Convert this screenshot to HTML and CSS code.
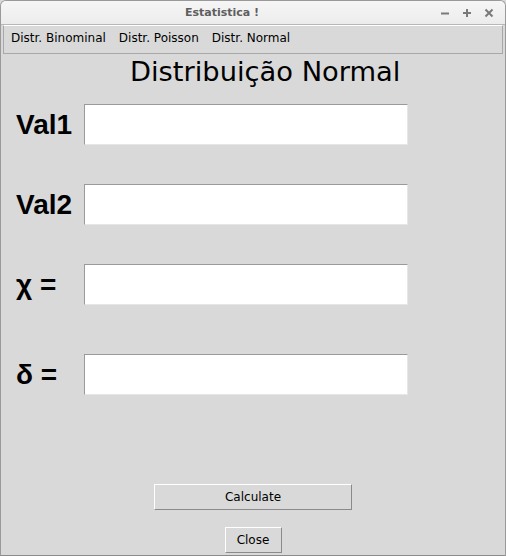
FILE: index.html
```html
<!DOCTYPE html>
<html>
<head>
<meta charset="utf-8">
<link rel="stylesheet" href="styles.css">
</head>
<body>
<div class="window">
  <div class="titlebar">
    <span class="title">Estatistica !</span>
    <div class="controls">
      <svg width="10" height="10" viewBox="0 0 10 10"><path d="M1 5.5H9" stroke="#7a7a7a" stroke-width="2"/></svg>
      <svg width="10" height="10" viewBox="0 0 10 10"><path d="M1 5H9M5 1V9" stroke="#7a7a7a" stroke-width="2"/></svg>
      <svg width="10" height="10" viewBox="0 0 10 10"><path d="M1.5 1.5L8.5 8.5M8.5 1.5L1.5 8.5" stroke="#7a7a7a" stroke-width="2"/></svg>
    </div>
  </div>
  <div class="menubar">
    <span class="menu">Distr. Binominal</span>
    <span class="menu">Distr. Poisson</span>
    <span class="menu">Distr. Normal</span>
  </div>
  <div class="content">
    <div class="heading">Distribuição Normal</div>
    <div class="form">
      <div class="row r1"><span class="label">Val1</span><div class="entry"></div></div>
      <div class="row r2"><span class="label">Val2</span><div class="entry"></div></div>
      <div class="row r3"><span class="label">χ =</span><div class="entry"></div></div>
      <div class="row r4"><span class="label">δ =</span><div class="entry"></div></div>
    </div>
    <div class="buttons">
      <div class="btn calc">Calculate</div>
      <div class="btn close">Close</div>
    </div>
  </div>
</div>
</body>
</html>
```
FILE: styles.css
```css
html, body { margin: 0; padding: 0; background: #d9d9d9; }
.window {
  width: 506px; height: 556px; box-sizing: border-box;
  border: 1px solid #9a9a9a; border-bottom-color: #8a8a8a;
  border-radius: 6px 6px 0 0;
  background: #d9d9d9; overflow: hidden;
  display: flex; flex-direction: column;
}
.titlebar {
  height: 23px; flex: none;
  background: linear-gradient(#f6f6f6, #ececec);
  border-bottom: 1px solid #b8b8b8;
  position: relative;
  display: flex; align-items: center; justify-content: center;
}
.title {
  font-family: "DejaVu Sans", sans-serif; font-weight: bold; font-size: 11px;
  color: #5e5e5e; margin-left: -62px;
}
.controls {
  position: absolute; right: 11px; top: 7px;
  display: flex; gap: 12px;
}
.menubar {
  height: 29px; flex: none; box-sizing: border-box;
  margin: 0 2px;
  border: 1px solid #a8a8a8; border-top: 1px solid #ffffff;
  background: #d9d9d9;
  display: flex; align-items: center; padding-left: 7px; padding-bottom: 4px; gap: 13px;
}
.menu {
  font-family: "DejaVu Sans", sans-serif; font-size: 12px; color: #000;
}
.content { flex: 1; display: flex; flex-direction: column; }
.heading {
  font-family: "DejaVu Sans", sans-serif; font-size: 27.3px; color: #000;
  padding-left: 129px; margin-top: 2px; line-height: 32px;
}
.form { display: flex; flex-direction: column; padding-left: 15px; margin-top: 16px; }
.row { display: flex; align-items: center; height: 41px; }
.r2 { margin-top: 39px; }
.r3 { margin-top: 39px; }
.r4 { margin-top: 49px; }
.label {
  width: 68px; font-family: "Liberation Sans", sans-serif; font-weight: bold;
  font-size: 28px; color: #000;
}
.entry {
  width: 324px; height: 41px; box-sizing: border-box; background: #fff;
  border-top: 1px solid #9a9a9a; border-left: 1px solid #9a9a9a;
  border-bottom: 1px solid #e6e6e6; border-right: 1px solid #e6e6e6;
}
.buttons { display: flex; flex-direction: column; align-items: center; margin-top: 89px; }
.btn {
  box-sizing: border-box; height: 26px; display: flex; align-items: center; justify-content: center;
  font-family: "DejaVu Sans", sans-serif; font-size: 12px; color: #000;
  border-top: 1px solid #ffffff; border-left: 1px solid #ffffff;
  border-bottom: 1px solid #8a8a8a; border-right: 1px solid #8a8a8a;
  background: #d9d9d9;
}
.calc { width: 198px; }
.close { width: 57px; margin-top: 17px; }
```
